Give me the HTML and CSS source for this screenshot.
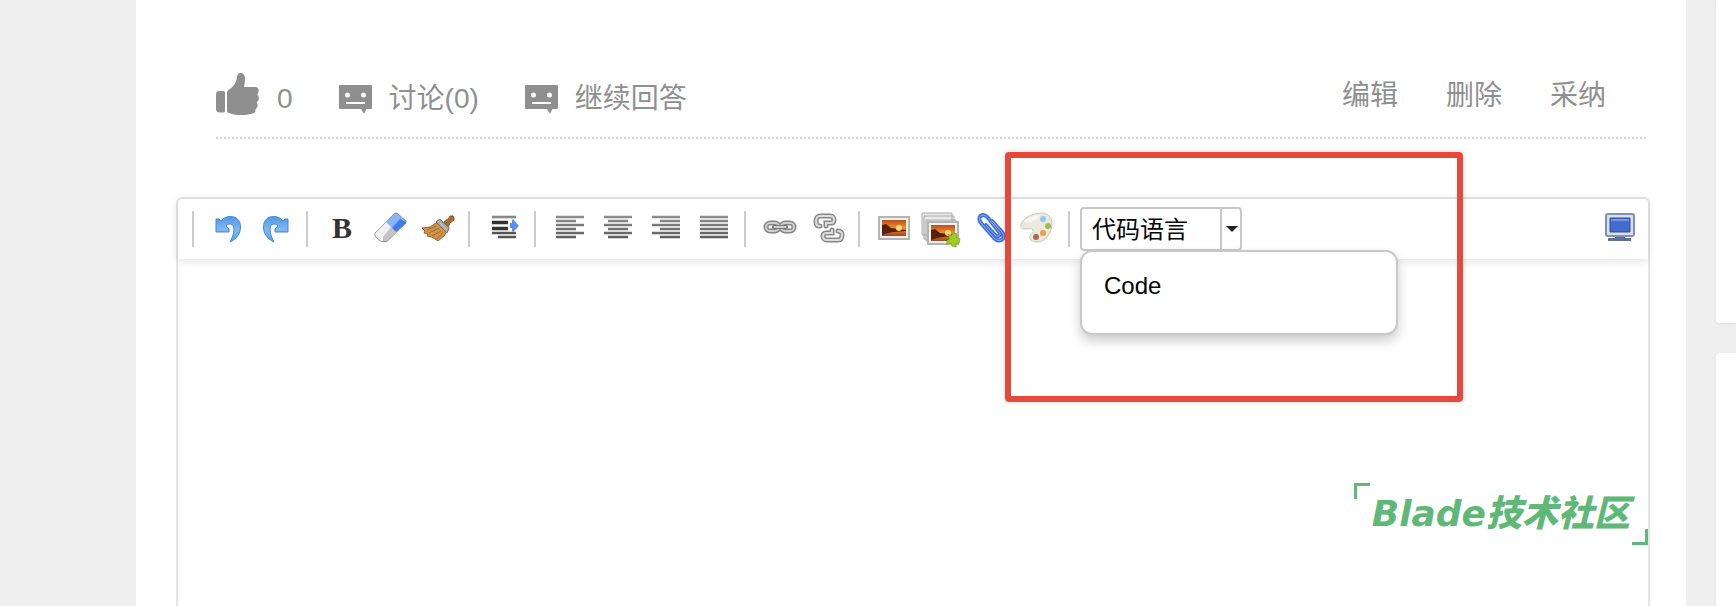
FILE: index.html
```html
<!DOCTYPE html>
<html lang="zh-CN">
<head>
  <meta charset="UTF-8">
  <meta name="viewport" content="width=device-width, initial-scale=1.0">
  <title>Blade技术社区</title>
  <link rel="stylesheet" href="styles.css">
</head>
<body>

  <main class="post">
    <div class="actions">
      <button type="button" class="action">
        <svg class="thumb" viewBox="0 0 44 42" width="44" height="42" aria-hidden="true">
          <path d="M3 18h4.500a1.500 1.500 0 0 1 1.500 1.500V38a1.500 1.500 0 0 1-1.500 1.500H4C1.500 39.500 0 38.500 0 36V22c0-2.500 1-4 3-4z"/>
          <path d="M11 38V20c0-2 1-3 3-4 4-3 6.500-7 7-12 .2-2.500 1.200-4 3.500-4S29 2 29 5c0 4-.5 6.500-1 9h11c3.500 0 4.600 3.500 3 6-.7 1-.8 1.500 0 2.500 1.300 2 1 4.500-.5 6-.8.8-.8 1.300-.3 2.200 1 2 .3 4-1.200 5-.6.500-.7 1-.6 1.800.2 2-1.400 2.800-3.400 3.300-4 1-6 1.200-10 1.200-5 0-8.500-.5-11.500-1.500-1.500-.5-3.500-1-3.500-2.500z"/>
        </svg>
        <span>0</span>
      </button>
      <button type="button" class="action">
        <svg viewBox="0 0 33 30" width="33" height="30" aria-hidden="true">
          <path fill-rule="evenodd" d="M1 0h31a1 1 0 0 1 1 1v22a1 1 0 0 1-1 1h-4.500L25 29l-3-5H1a1 1 0 0 1-1-1V1a1 1 0 0 1 1-1zM8.500 7.500a2.500 2.500 0 1 0 0 5 2.500 2.500 0 0 0 0-5zM24.500 7.500a2.500 2.500 0 1 0 0 5 2.500 2.500 0 0 0 0-5zM7 17v2h19v-2z"/>
        </svg>
        <span>讨论(0)</span>
      </button>
      <button type="button" class="action">
        <svg viewBox="0 0 33 30" width="33" height="30" aria-hidden="true">
          <path fill-rule="evenodd" d="M1 0h31a1 1 0 0 1 1 1v22a1 1 0 0 1-1 1h-4.500L25 29l-3-5H1a1 1 0 0 1-1-1V1a1 1 0 0 1 1-1zM8.500 7.500a2.500 2.500 0 1 0 0 5 2.500 2.500 0 0 0 0-5zM24.500 7.500a2.500 2.500 0 1 0 0 5 2.500 2.500 0 0 0 0-5zM7 17v2h19v-2z"/>
        </svg>
        <span>继续回答</span>
      </button>
      <nav class="manage">
        <a href="#">编辑</a>
        <a href="#">删除</a>
        <a href="#">采纳</a>
      </nav>
    </div>

    <section class="editor">
      <div class="toolbar">
        <span class="sep"></span>
        <button type="button" class="tool" aria-label="撤销">
          <svg viewBox="0 0 32 32"><path id="undo" fill="url(#blue)" stroke="#3f86d4" stroke-width="1" d="M4 7v13h13v-3l-3-3c2-3 8-3 8 3 0 5-2 9-4 13 7-3 10.500-9 10.500-15 0-7-4.500-10.500-10-10.500-4 0-7 1.500-9.500 4.500L7 7z"/></svg>
        </button>
        <button type="button" class="tool" aria-label="重做">
          <svg viewBox="0 0 32 32"><use href="#undo" transform="translate(32 0) scale(-1 1)"/></svg>
        </button>
        <span class="sep"></span>
        <button type="button" class="tool bold" aria-label="加粗">B</button>
        <button type="button" class="tool" aria-label="清除格式">
          <svg viewBox="0 0 32 32">
            <path fill="#f1f1f1" d="M1 21 12 10l10 10-9 10H7l-6-6z"/>
            <path fill="#c4c4c4" d="m9 25 8-10 5 5-9 10H9z"/>
            <path fill="#87b5fb" d="m12 10 9-9h2l9 8v2l-10 9z"/>
            <path fill="#427ceb" d="m18 16 8-9 6 3v1L22 20z"/>
            <path fill="none" stroke="#777" stroke-opacity=".7" d="M1 21 21 1h2l9 8v2L13 29.500H7l-6-5z"/>
          </svg>
        </button>
        <button type="button" class="tool" aria-label="格式刷">
          <svg viewBox="0 0 32 32">
            <path fill="#ad6b37" stroke="#85512c" d="m22 10 5-4 1-2h3l1 2v2l-4 3-2 4z"/>
            <path fill="#cf9445" stroke="#97602b" d="M14 11 8 15l-8 1 3 3-1 2 4 1-1 2 5 1 6 4 6-5 4-6z"/>
            <path fill="none" stroke="#a56c2f" d="m5 18 9-4M7 21l10-5M10 24l9-5M15 27l6-7"/>
            <path fill="#aaa79e" stroke="#77736a" d="m14 10 4-3 9 9-2 5z"/>
            <path fill="none" stroke="#deded6" stroke-dasharray="2 1" d="m16 9 9 9"/>
          </svg>
        </button>
        <span class="sep"></span>
        <button type="button" class="tool" aria-label="首行缩进">
          <svg viewBox="0 0 32 32" fill="none">
            <path stroke="#888" stroke-width="2.600" d="M4 5h24"/>
            <path stroke="#333" stroke-width="3.600" d="M4 10.500h16M4 16.500h16"/>
            <path stroke="#555" stroke-width="2.600" d="M4 21h24M10 25h18"/>
            <path fill="#5b8cf0" d="M22 11h2V8l1-1 6 7-6 6-1-1v-3h-2z"/>
          </svg>
        </button>
        <span class="sep"></span>
        <button type="button" class="tool" aria-label="居左对齐">
          <svg viewBox="0 0 32 32"><path stroke="url(#gray)" stroke-width="2.600" d="M2 5h28M2 9h20M2 13h28M2 17h20M2 21h28M2 25h20"/></svg>
        </button>
        <button type="button" class="tool" aria-label="居中对齐">
          <svg viewBox="0 0 32 32"><path stroke="url(#gray)" stroke-width="2.600" d="M2 5h28M6 9h20M2 13h28M6 17h20M2 21h28M6 25h20"/></svg>
        </button>
        <button type="button" class="tool" aria-label="居右对齐">
          <svg viewBox="0 0 32 32"><path stroke="url(#gray)" stroke-width="2.600" d="M2 5h28M10 9h20M2 13h28M10 17h20M2 21h28M10 25h20"/></svg>
        </button>
        <button type="button" class="tool" aria-label="两端对齐">
          <svg viewBox="0 0 32 32"><path stroke="url(#gray)" stroke-width="2.600" d="M2 5h28M2 9h28M2 13h28M2 17h28M2 21h28M2 25h28"/></svg>
        </button>
        <span class="sep"></span>
        <button type="button" class="tool" aria-label="超链接">
          <svg viewBox="0 0 32 32" fill="none">
            <g stroke="#858585" stroke-width="5"><rect x="2" y="11" width="13" height="8" rx="4"/><rect x="17" y="11" width="13" height="8" rx="4"/></g>
            <g stroke="#d0d0d0" stroke-width="2"><rect x="2" y="11" width="13" height="8" rx="4"/><rect x="17" y="11" width="13" height="8" rx="4"/></g>
            <path stroke="#777" stroke-width="4" stroke-linecap="round" d="M10 15h12"/>
            <path stroke="#d0d0d0" stroke-width="2" d="M10 15h12"/>
          </svg>
        </button>
        <button type="button" class="tool" aria-label="取消链接">
          <svg viewBox="0 0 32 32" fill="none" stroke-linecap="round">
            <g stroke="#888" stroke-width="5"><path d="M8 14H7c-3 0-3-3-3-5s1-5 4-5h10c3 0 4 2 4 4s-1 3-3 3h-5v3"/><path d="M20 18v3h-5c-3 0-4 1-4 3s1 4 4 4h11c3 0 4-2 4-5s-1-4-4-4"/></g>
            <g stroke="#dcdcdc" stroke-width="2"><path d="M8 14H7c-3 0-3-3-3-5s1-5 4-5h10c3 0 4 2 4 4s-1 3-3 3h-5v3"/><path d="M20 18v3h-5c-3 0-4 1-4 3s1 4 4 4h11c3 0 4-2 4-5s-1-4-4-4"/></g>
          </svg>
        </button>
        <span class="sep"></span>
        <button type="button" class="tool" aria-label="单图上传">
          <svg viewBox="0 0 32 32">
            <g id="photo">
              <path fill="#f2f2f2" stroke="#b4b4b4" stroke-width="2" d="M1 5h30v22H1z"/>
              <path fill="url(#sunset)" d="M4 8h24v16H4z"/>
              <path fill="#55200c" d="M4 13l4-1 5 4 15 2v1l-12 1-6 1-6 2z"/>
              <circle cx="21" cy="16" r="3" fill="#ffd976"/>
            </g>
          </svg>
        </button>
        <button type="button" class="tool" aria-label="多图上传">
          <svg viewBox="0 0 32 32">
            <g fill="#e9e9e9" stroke="#aaa"><path d="M-4 1h30v22H-4zM-2 4h30v23H-2zM0 8h30v21H0z"/></g>
            <use href="#photo" transform="translate(1 5)"/>
            <path fill="#9fcb25" stroke="#84b31d" d="m22 22 3 2 3-3 3 1v4l3 1-1 4-3 1v3l-4-1-1-3-4 1v-3l3-2z"/>
          </svg>
        </button>
        <button type="button" class="tool" aria-label="附件">
          <svg viewBox="0 0 32 32" fill="none" stroke-linecap="round">
            <path stroke="#3f70d3" stroke-width="4" d="m12 13 9 10c3 3 7 0 4-3L15 7C9-1 2 5 7 11l13 15c6 6 13 0 8-6L18 9"/>
            <path stroke="#8fb3f5" stroke-width="1" d="m12 13 9 10c3 3 7 0 4-3L15 7C9-1 2 5 7 11l13 15c6 6 13 0 8-6L18 9"/>
          </svg>
        </button>
        <button type="button" class="tool" aria-label="涂鸦">
          <svg viewBox="2 0 32 32">
            <path fill="#ebe9e0" stroke="#c9c6bb" d="M1 13C3 5 14 1 22 1c6 0 10 5 10 10 0 9-6 19-15 19-5 0-8-2-7-6 1-3 4-3 3-6-1-2-4-1-7-1-3 0-6-1-5-4z"/>
            <path fill="#fff" fill-opacity=".6" d="M4 10c3-4 10-7 16-7-2 5-9 8-16 7z"/>
            <circle cx="23" cy="7" r="3" fill="#8cc8f4"/>
            <circle cx="28" cy="14" r="3" fill="#a0bd48"/>
            <circle cx="23" cy="21" r="3" fill="#e8a044"/>
            <circle cx="16" cy="25" r="3" fill="#b3664f"/>
          </svg>
        </button>
        <span class="sep"></span>

        <div class="combo">
          <div class="combo-box">
            <select class="combo-select" aria-label="代码语言">
              <option>代码语言</option>
              <option>Code</option>
            </select>
            <span class="combo-arrow"></span>
          </div>
          <ul class="combo-menu">
            <li><button type="button">Code</button></li>
          </ul>
          <div class="highlight"></div>
        </div>

        <button type="button" class="tool fullscreen" aria-label="全屏">
          <svg viewBox="0 0 32 32">
            <path fill="#5c6f96" d="M11 23h10v3h6v3H4v-3h7z"/>
            <rect x="2" y="2" width="28" height="22" rx="2" fill="#d9e0eb" stroke="#8291b0" stroke-width="2"/>
            <path fill="#456bd0" stroke="#34508f" d="M6 6h20v14H6z"/>
            <path fill="#7398e9" d="M7 7h18v2H7z"/>
          </svg>
        </button>
      </div>

      <div class="content">
        <div class="watermark">Blade技术社区</div>
      </div>
    </section>
  </main>

  <aside class="sidebar">
    <div class="card card-top"></div>
    <div class="card card-rest"></div>
  </aside>

  <!-- shared gradients -->
  <svg class="defs" aria-hidden="true">
    <linearGradient id="blue" x1="0" y1="0" x2="0" y2="1">
      <stop offset="0" stop-color="#4f97df"/>
      <stop offset=".5" stop-color="#80b8f2"/>
      <stop offset="1" stop-color="#5b9fe6"/>
    </linearGradient>
    <linearGradient id="gray" x1="0" y1="0" x2="0" y2="1">
      <stop offset="0" stop-color="#8c8c8c"/>
      <stop offset="1" stop-color="#606060"/>
    </linearGradient>
    <linearGradient id="sunset" x1="0" y1="0" x2="0" y2="1">
      <stop offset="0" stop-color="#b8501a"/>
      <stop offset=".5" stop-color="#ee9232"/>
      <stop offset="1" stop-color="#a5441b"/>
    </linearGradient>
  </svg>

</body>
</html>
```
FILE: styles.css
```css
body {
  margin: 0;
  display: flex;
  min-height: 100vh;
  padding-left: 136px;
  box-sizing: border-box;
  background-color: #efefef;
  font-family: "Liberation Sans", "Noto Sans CJK SC", sans-serif;
}

button {
  padding: 0;
  border: none;
  background: none;
  font: inherit;
  color: inherit;
  cursor: pointer;
}

.post {
  flex: 1;
  display: flex;
  flex-direction: column;
  padding: 56px 36px 0 40px;
  background-color: #fff;
}

.actions {
  display: flex;
  align-items: flex-end;
  gap: 46px;
  height: 59px;
  margin: 0 4px 0 40px;
  padding-bottom: 22px;
  border-bottom: 2px dotted #d8d8d8;
  font-size: 28px;
  line-height: 32px;
  color: #8f8f8f;
}

.action {
  display: flex;
  align-items: flex-end;
  gap: 17px;
}

.action svg {
  fill: #8f8f8f;
}

.manage {
  display: flex;
  gap: 48px;
  margin-left: auto;
  padding: 0 40px 3px 0;
}

.manage a {
  color: inherit;
  text-decoration: none;
}

.editor {
  flex: 1;
  display: flex;
  flex-direction: column;
  margin-top: 58px;
  border: 2px solid #e6e6e6;
  border-bottom: none;
  border-radius: 6px 6px 0 0;
}

.toolbar {
  display: flex;
  align-items: center;
  height: 60px;
  padding: 0 4px 0 8px;
  border-radius: 4px 4px 0 0;
  box-shadow: 0 2px 10px rgba(0, 0, 0, 0.12);
}

.sep {
  width: 2px;
  height: 36px;
  margin: 0 10px 0 6px;
  background-color: #c9ccd1;
}

.tool {
  display: flex;
  align-items: center;
  justify-content: center;
  width: 48px;
  height: 34px;
  padding-bottom: 2px;
}

.tool svg {
  width: 32px;
  height: 32px;
  overflow: visible;
}

.bold {
  font-family: "Liberation Serif", serif;
  font-size: 30px;
  font-weight: bold;
  color: #333;
}

.fullscreen {
  margin-left: auto;
}

.combo {
  position: relative;
  width: 162px;
}

.combo-box {
  display: flex;
  height: 44px;
  box-sizing: border-box;
  border: 2px solid #c8c8c8;
  border-radius: 4px;
  background-color: #fff;
}

.combo-select {
  flex: 1;
  min-width: 0;
  padding: 0 10px;
  border: none;
  background: none;
  appearance: none;
  font-family: "Liberation Sans", "Noto Sans CJK SC", sans-serif;
  font-size: 24px;
  color: #000;
}

.combo-arrow {
  display: flex;
  align-items: center;
  justify-content: flex-end;
  width: 18px;
  border-left: 2px solid #c8c8c8;
}

.combo-arrow::before {
  content: "";
  margin-right: 2px;
  border: 6px solid transparent;
  border-top-color: #222;
  border-bottom: none;
}

.combo-menu {
  position: absolute;
  top: 100%;
  left: 0;
  z-index: 1;
  width: 318px;
  box-sizing: border-box;
  margin: 0;
  margin-top: -1px;
  padding: 16px 22px 29px;
  border: 2px solid #c8c8c8;
  border-radius: 12px;
  background-color: #fff;
  box-shadow: 0 6px 12px rgba(0, 0, 0, 0.2);
  list-style: none;
  font-size: 24px;
  line-height: 36px;
}

.combo-menu button {
  display: block;
}

/* red marker around the language menu */
.highlight {
  position: absolute;
  top: -55px;
  left: -75px;
  z-index: 2;
  width: 458px;
  height: 250px;
  box-sizing: border-box;
  border: 6px solid #e6483d;
  border-radius: 4px;
  box-shadow: 0 0 6px rgba(0, 0, 0, 0.15);
  pointer-events: none;
}

.content {
  flex: 1;
  position: relative;
}

.watermark {
  position: absolute;
  right: 0;
  bottom: 61px;
  padding: 8px 18px;
  font-family: "DejaVu Sans", "Noto Sans CJK SC", sans-serif;
  font-size: 36px;
  line-height: 46px;
  font-style: italic;
  font-weight: 900;
  color: #5fb878;
}

.watermark::before,
.watermark::after {
  content: "";
  position: absolute;
  width: 13px;
  height: 13px;
  border: 0 solid #5fb878;
}

.watermark::before {
  top: 0;
  left: 0;
  border-width: 3px 0 0 3px;
}

.watermark::after {
  right: 0;
  bottom: 0;
  border-width: 0 3px 3px 0;
}

.sidebar {
  display: flex;
  flex-direction: column;
  gap: 30px;
  width: 20px;
  margin-left: 30px;
}

.card {
  background-color: #fff;
  box-shadow: 0 1px 4px rgba(0, 0, 0, 0.06);
}

.card-top {
  height: 323px;
  border-radius: 0 0 0 4px;
}

.card-rest {
  flex: 1;
  border-radius: 4px 0 0 0;
}

.defs {
  position: absolute;
  width: 0;
  height: 0;
}
```
